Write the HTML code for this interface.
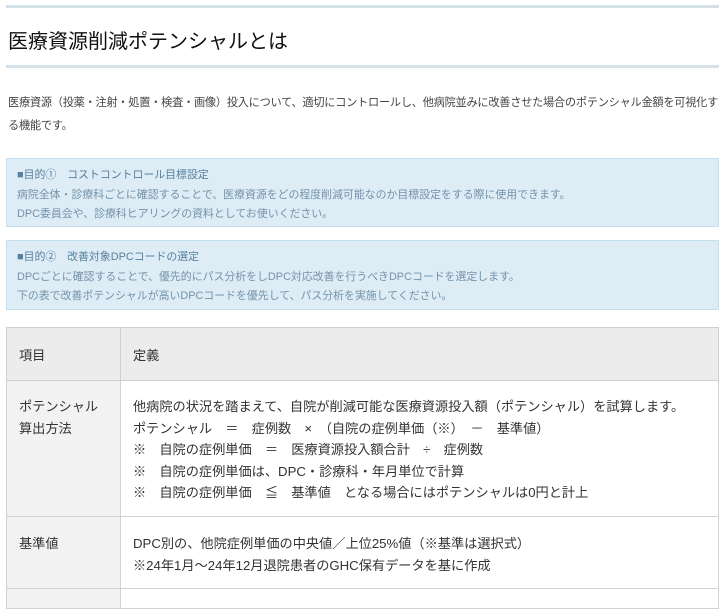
<!DOCTYPE html>
<html><head><meta charset="utf-8"><style>
*{margin:0;padding:0;box-sizing:border-box}
body{width:725px;height:595px;overflow:hidden;background:#fff;font-family:"Liberation Sans","Noto Sans CJK JP",sans-serif;color:#333;position:relative}
.line{position:absolute;left:6px;width:713px;height:3px;background:#d5e1e8}
h1{position:absolute;left:8px;top:25px;font-size:20px;font-weight:normal;color:#111}
.p{position:absolute;left:8px;top:92px;width:714px;font-size:11.2px;line-height:23px;color:#444;letter-spacing:-0.25px}
.box{position:absolute;left:6px;width:713px;background:#deecf6;border:1px solid #c2e0f0;padding:7px 10px;font-size:10.9px;line-height:19.5px;color:#7393aa}
.box b{font-weight:normal;color:#56809f}
table{position:absolute;left:6px;top:327px;width:713px;border-collapse:collapse;font-size:13.2px;color:#333}
td{border:1px solid #d2d2d2;vertical-align:top;padding:0 12px}
tr.h td{background:#ececec;height:53px;vertical-align:middle;border-color:#d0d0d0}
td.l{background:#f2f2f2;width:114px}
.r2 td{padding-top:15px;padding-bottom:8px;line-height:21.5px;height:136px}
.r3 td{padding-top:16px;line-height:21.5px;height:72px}
</style></head><body>
<div class="line" style="top:5px"></div>
<h1>医療資源削減ポテンシャルとは</h1>
<div class="line" style="top:65px"></div>
<div class="p">医療資源（投薬・注射・処置・検査・画像）投入について、適切にコントロールし、他病院並みに改善させた場合のポテンシャル金額を可視化する機能です。</div>
<div class="box" style="top:158px;height:69px"><b>■目的①　コストコントロール目標設定</b><br>病院全体・診療科ごとに確認することで、医療資源をどの程度削減可能なのか目標設定をする際に使用できます。<br>DPC委員会や、診療科ヒアリングの資料としてお使いください。</div>
<div class="box" style="top:240px;height:70px"><b>■目的②　改善対象DPCコードの選定</b><br>DPCごとに確認することで、優先的にパス分析をしDPC対応改善を行うべきDPCコードを選定します。<br>下の表で改善ポテンシャルが高いDPCコードを優先して、パス分析を実施してください。</div>
<table>
<tr class="h"><td class="l" style="background:#ececec">項目</td><td>定義</td></tr>
<tr class="r2"><td class="l">ポテンシャル<br>算出方法</td><td>他病院の状況を踏まえて、自院が削減可能な医療資源投入額（ポテンシャル）を試算します。<br>ポテンシャル　＝　症例数　×　（自院の症例単価（※）　－　基準値）<br>※　自院の症例単価　＝　医療資源投入額合計　÷　症例数<br>※　自院の症例単価は、DPC・診療科・年月単位で計算<br>※　自院の症例単価　≦　基準値　となる場合にはポテンシャルは0円と計上</td></tr>
<tr class="r3"><td class="l">基準値</td><td>DPC別の、他院症例単価の中央値／上位25%値（※基準は選択式）<br>※24年1月～24年12月退院患者のGHC保有データを基に作成</td></tr>
<tr><td class="l" style="height:20px"></td><td></td></tr>
</table>
</body></html>
